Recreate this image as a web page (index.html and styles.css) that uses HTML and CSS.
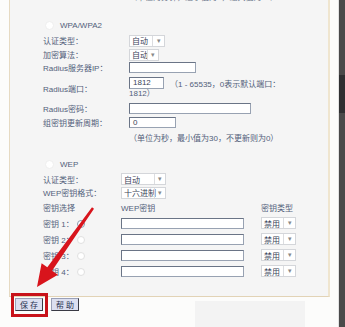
FILE: index.html
```html
<!DOCTYPE html>
<html>
<head>
    <title>无线安全设置</title>
    <link rel="stylesheet" href="styles.css">
</head>
<body>
    <div class="screen">
        <div class="page">
            <div class="panel">
                <div class="top-note">（单位为分钟，最小值为1，最大值为30）</div>

                <div class="row wpa-head"><span class="radio"></span>WPA/WPA2</div>
                <div class="row r-auth"><span class="label">认证类型：</span><span class="select w36">自动<span class="arrow">▾</span></span></div>
                <div class="row r-enc"><span class="label">加密算法：</span><span class="select w30">自动<span class="arrow">▾</span></span></div>
                <div class="row r-ip"><span class="label">Radius服务器IP：</span><span class="input w67"></span></div>
                <div class="row r-port">
                    <span class="label">Radius端口：</span>
                    <div class="port-box">
                        <div class="port-line"><span class="input w35">1812</span><span class="hint">（1 - 65535，0表示默认端口：</span></div>
                        <div class="port-line2">1812）</div>
                    </div>
                </div>
                <div class="row r-pwd"><span class="label">Radius密码：</span><span class="input w122"></span></div>
                <div class="row r-group"><span class="label">组密钥更新周期：</span><span class="input w47">0</span></div>
                <div class="row r-note"><span class="label"></span><span class="hint">（单位为秒，最小值为30，不更新则为0）</span></div>

                <div class="row wep-head"><span class="radio"></span>WEP</div>
                <div class="row r-wauth"><span class="label short">认证类型：</span><span class="select w45">自动<span class="arrow">▾</span></span></div>
                <div class="row r-fmt"><span class="label short">WEP密钥格式：</span><span class="select w45">十六进制<span class="arrow">▾</span></span></div>
                <div class="row r-keyhead"><span class="label short">密钥选择</span><span class="key-col">WEP密钥</span><span>密钥类型</span></div>
                <div class="row key"><span class="label short">密钥 1：<span class="kradio on"></span></span><span class="input w123"></span><span class="select w35">禁用<span class="arrow">▾</span></span></div>
                <div class="row key"><span class="label short">密钥 2：<span class="kradio"></span></span><span class="input w123"></span><span class="select w35">禁用<span class="arrow">▾</span></span></div>
                <div class="row key"><span class="label short">密钥 3：<span class="kradio"></span></span><span class="input w123"></span><span class="select w35">禁用<span class="arrow">▾</span></span></div>
                <div class="row key"><span class="label short">密钥 4：<span class="kradio"></span></span><span class="input w123"></span><span class="select w35">禁用<span class="arrow">▾</span></span></div>
            </div>

            <div class="buttons">
                <button class="btn">保 存</button>
                <button class="btn">帮 助</button>
                <div class="glare"></div>
            </div>
        </div>
        <div class="dark"><div class="dark-band"></div></div>
    </div>

    <!-- annotation drawn over the photo -->
    <div class="mark-box"></div>
    <svg class="arrow-mark" width="345" height="327" viewBox="0 0 345 327">
        <polygon points="92,207.3 47.3,267.3 41.6,263.2 37,287 57.9,274.8 52.1,270.7 94,208.7" fill="#d8141c"/>
    </svg>
</body>
</html>
```

FILE: styles.css
```css
body {
    margin: 0;
    width: 345px;
    height: 327px;
    overflow: hidden;
    background: #fcfcfb;
    font-family: "Liberation Sans", "Noto Sans CJK SC", sans-serif;
    font-size: 8px;
    color: #52607a;
    position: relative;
}

.screen {
    display: flex;
    height: 327px;
}

.page {
    width: 338px;
    flex: none;
}

.panel {
    margin: -8px 0 0 9px;
    width: 285px;
    padding: 0 0 17px 33px;
    background: #f5f5f5;
    border-left: 1px solid #e6dac2;
    border-right: 2px solid #efe5cf;
    border-bottom: 1px solid #e2d3b6;
}

.top-note {
    height: 12px;
    line-height: 11px;
    padding-left: 86px;
    margin-bottom: 14px;
    white-space: nowrap;
    overflow: hidden;
    color: #6a768a;
}

.row {
    display: flex;
    align-items: center;
    white-space: nowrap;
}

.label {
    width: 86px;
    flex: none;
}

.label.short {
    width: 78px;
}

.wpa-head, .wep-head { height: 15px; }
.wep-head { margin-top: 10px; }
.r-auth { height: 15px; }
.r-enc { height: 13px; }
.r-ip { height: 13px; }
.r-pwd { height: 17px; }
.r-group { height: 11px; }
.r-note { height: 19px; }
.r-wauth { height: 14px; }
.r-fmt { height: 13px; }
.r-keyhead { height: 16px; }
.key { height: 16px; }

.r-port {
    height: 26px;
    align-items: flex-start;
}

.r-port .label {
    margin-top: 9px;
}

.port-box {
    padding-top: 3px;
}

.port-line {
    display: flex;
    align-items: center;
    height: 12px;
}

.port-line2 {
    height: 10px;
    line-height: 10px;
}

.hint {
    margin-left: 6px;
}

.r-note .hint {
    margin-left: 0;
}

.radio {
    width: 7px;
    height: 7px;
    border-radius: 50%;
    background: #fff;
    border: 1px solid #eeeeee;
    margin: 0 6px 0 2px;
}

.kradio {
    display: inline-block;
    width: 6px;
    height: 6px;
    border-radius: 50%;
    border: 1px solid #e0e0e0;
    background: #fff;
    margin-left: 3px;
    vertical-align: middle;
}

.kradio.on {
    border-color: #8a9ab0;
}

.input {
    display: inline-block;
    box-sizing: border-box;
    height: 11px;
    line-height: 9px;
    padding-left: 3px;
    background: #fff;
    border: 1px solid #98a2b2;
    border-top-color: #6a7486;
    border-left-color: #6a7486;
    color: #3a4458;
}

.port-line .input { height: 12px; line-height: 10px; }

.w35 { width: 35px; }
.w47 { width: 47px; }
.w67 { width: 67px; }
.w122 { width: 122px; }
.w123 { width: 123px; }

.select {
    display: inline-flex;
    align-items: center;
    box-sizing: border-box;
    height: 12px;
    padding-left: 2px;
    background: #fff;
    border: 1px solid #d4d6da;
    color: #3a4458;
    position: relative;
}

.select .arrow {
    position: absolute;
    right: 0;
    top: 0;
    bottom: 0;
    width: 10px;
    border-left: 1px solid #dcdde0;
    font-size: 7px;
    line-height: 10px;
    text-align: center;
    color: #888;
}

.select.w36 { width: 36px; }
.select.w30 { width: 30px; }
.select.w45 { width: 45px; }
.select.w35 { width: 35px; }
.select.w35 .arrow { width: 11px; }
.select.w36 .arrow { width: 11px; }

.key-col {
    width: 140px;
    flex: none;
}

.key .input {
    margin-right: 17px;
}

.buttons {
    display: flex;
    gap: 8px;
    padding: 1px 0 0 15px;
    position: relative;
}

.btn {
    box-sizing: border-box;
    width: 28px;
    height: 13px;
    padding: 0;
    font-family: "Noto Sans CJK SC", sans-serif;
    font-size: 8px;
    line-height: 10px;
    color: #2a3350;
    background: #dcdff0;
    border: 1px solid #3a3a44;
    border-top-color: #9aa0b8;
    border-left-color: #9aa0b8;
}

.glare {
    position: absolute;
    left: 195px;
    top: 4px;
    width: 110px;
    height: 30px;
    background: #f3f3f3;
}

.dark {
    flex: 1;
    background: #4a4a4a;
    border-left: 1px solid #e2e2e2;
}

.dark-band {
    margin-top: 75px;
    height: 38px;
    background: #2f3032;
}

.mark-box {
    position: absolute;
    left: 11px;
    top: 293px;
    width: 31px;
    height: 18px;
    border: 3px solid #c8121a;
}

.arrow-mark {
    position: absolute;
    left: 0;
    top: 0;
}
```
